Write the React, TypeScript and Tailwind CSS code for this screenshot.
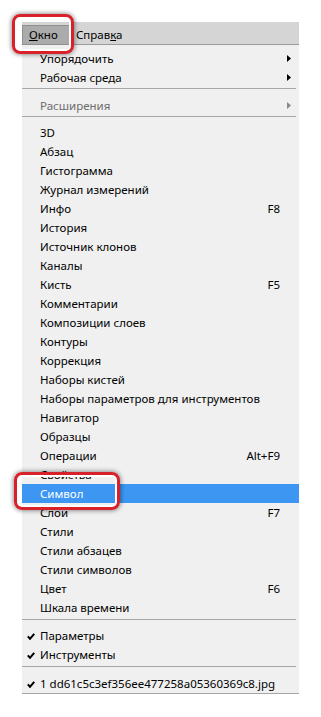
const TOP_ITEMS = [
  { label: 'Упорядочить', arrow: true },
  { label: 'Рабочая среда', arrow: true },
];

const PANELS: { label: string; key?: string }[] = [
  { label: '3D' },
  { label: 'Абзац' },
  { label: 'Гистограмма' },
  { label: 'Журнал измерений' },
  { label: 'Инфо', key: 'F8' },
  { label: 'История' },
  { label: 'Источник клонов' },
  { label: 'Каналы' },
  { label: 'Кисть', key: 'F5' },
  { label: 'Комментарии' },
  { label: 'Композиции слоев' },
  { label: 'Контуры' },
  { label: 'Коррекция' },
  { label: 'Наборы кистей' },
  { label: 'Наборы параметров для инструментов' },
  { label: 'Навигатор' },
  { label: 'Образцы' },
  { label: 'Операции', key: 'Alt+F9' },
  { label: 'Свойства' },
  { label: 'Символ' },
  { label: 'Слои', key: 'F7' },
  { label: 'Стили' },
  { label: 'Стили абзацев' },
  { label: 'Стили символов' },
  { label: 'Цвет', key: 'F6' },
  { label: 'Шкала времени' },
];

function Arrow({ muted }: { muted?: boolean }) {
  return (
    <svg width="4" height="7" viewBox="0 0 4 7" className="absolute right-[8px] top-[6px]">
      <path d="M0 0 L4 3.5 L0 7 Z" fill={muted ? '#8a8a8a' : '#000'} />
    </svg>
  );
}

function Check() {
  return (
    <svg width="8" height="7" viewBox="0 0 8 7" className="absolute left-[5px] top-[7px]">
      <path d="M0.8 3.4 L3 5.8 L7.2 0.8" fill="none" stroke="#000" strokeWidth="2" />
    </svg>
  );
}

function Row({ children, shortcut, arrow, muted, checked, active }: {
  children: React.ReactNode; shortcut?: string; arrow?: boolean; muted?: boolean; checked?: boolean; active?: boolean;
}) {
  return (
    <div className={`relative h-[19px] flex items-center pt-px pl-[18px] pr-[19px] ${active ? 'bg-[#3c96f2] text-white' : muted ? 'text-[#6d6d6d]' : 'text-black'}`}>
      {checked && <Check />}
      <span className="flex-1 whitespace-nowrap">{children}</span>
      {shortcut && <span>{shortcut}</span>}
      {arrow && <Arrow muted={muted} />}
    </div>
  );
}

function Sep({ className }: { className: string }) {
  return <div className={`h-px bg-[#a6a6a6] mr-[3px] ${className}`} />;
}

export default function App() {
  return (
    <div className="relative w-[321px] h-[717px] bg-white overflow-hidden text-[11.5px] leading-none" style={{ fontFamily: '"Noto Sans", "Liberation Sans", sans-serif' }}>
      <div className="absolute left-[22px] top-[22px] w-[277px]">
        {/* menu bar */}
        <div className="h-[23px] bg-[#d5d5d5] border-b border-[#9c9c9c] flex items-center">
          <div className="h-[20px] w-[48px] mt-[3px] bg-[#ababab] border border-[#8f8f8f] flex items-center pl-[6px] text-black">
            <span><span className="underline">О</span>кно</span>
          </div>
          <span className="ml-[6px] mt-[3px] text-black">Справ<span className="underline">к</span>а</span>
        </div>

        {/* dropdown */}
        <div className="bg-[#f0f0f0] border-b border-[#a6a6a6] pt-[4px]">
          {TOP_ITEMS.map((it) => (
            <Row key={it.label} arrow={it.arrow}>{it.label}</Row>
          ))}
          <Sep className="mt-[1px] mb-[7px]" />
          <Row arrow muted>Расширения</Row>
          <Sep className="mt-[1px] mb-[6px]" />
          {PANELS.map((p) => (
            <Row key={p.label} shortcut={p.key} active={p.label === 'Символ'}>{p.label}</Row>
          ))}
          <Sep className="mt-[2px] mb-[6px]" />
          <Row checked>Параметры</Row>
          <Row checked>Инструменты</Row>
          <Sep className="mt-[2px] mb-[7px]" />
          <Row checked>1 dd61c5c3ef356ee477258a05360369c8.jpg</Row>
        </div>
      </div>

      {/* red callouts */}
      <div className="absolute left-[12px] top-[14px] w-[62px] h-[40px] rounded-[8px] border-[3px] border-[#d8222b] shadow-[0_0_4px_1px_rgba(0,0,0,0.4),inset_0_0_0_2px_#ffffff]" />
      <div className="absolute left-[14px] top-[472px] w-[106px] h-[38px] rounded-[8px] border-[3px] border-[#d8222b] shadow-[0_0_4px_1px_rgba(0,0,0,0.4),inset_0_0_0_2px_#ffffff]" />
    </div>
  );
}
